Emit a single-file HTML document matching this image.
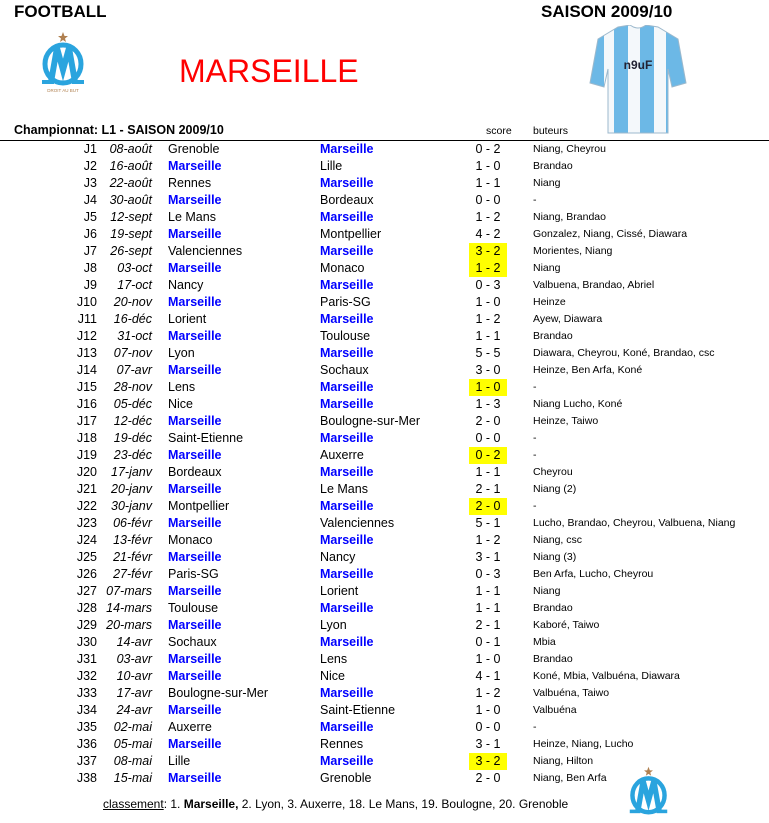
<!DOCTYPE html>
<html><head><meta charset="utf-8"><style>
body{margin:0;width:769px;height:820px;background:#fff;position:relative;font-family:"Liberation Sans",Arial,sans-serif;overflow:hidden}
.a{position:absolute;white-space:nowrap}
.r{position:absolute;left:0;width:769px;height:17px;font-size:12.5px;line-height:17px}
.r span{position:absolute;white-space:nowrap}
.j{right:672px;text-align:right}
.d{right:617px;font-style:italic}
.h{left:168px}
.w{left:320px}
.b{color:#0000ff;font-weight:bold}
.s{left:469px;width:38px;text-align:center}
.y{background:#ffff00}
.g{left:533px;font-size:10.5px}
</style></head><body>
<div class="a" style="left:14px;top:2px;font-size:17px;font-weight:bold">FOOTBALL</div>
<div class="a" style="left:541px;top:2px;font-size:17px;font-weight:bold">SAISON 2009/10</div>
<div class="a" style="left:179px;top:53px;font-size:32px;color:#ff0000">MARSEILLE</div>
<svg class="a" style="left:38px;top:30px" width="50" height="65" viewBox="0 0 50 65">
<polygon points="25,2 26.5,6 30,6 27,8.5 28,12 25,10 22,12 23,8.5 20,6 23.5,6" fill="#b08050"/>
<ellipse cx="25" cy="34" rx="18" ry="19" fill="none" stroke="#2aa4de" stroke-width="5"/>
<path d="M13,52 L19,18 L25,40 L31,18 L37,52" fill="none" stroke="#2aa4de" stroke-width="6" stroke-linejoin="miter"/>
<rect x="4" y="50" width="12" height="4" fill="#2aa4de"/><rect x="34" y="50" width="12" height="4" fill="#2aa4de"/>
<text x="25" y="62" font-size="4.5" fill="#b08050" text-anchor="middle" font-family="Liberation Sans">DROIT AU BUT</text>
</svg>
<svg class="a" style="left:588px;top:25px" width="100" height="110" viewBox="0 0 100 110">
<defs><clipPath id="c"><path d="M30,2 L42,0 Q50,6 58,0 L70,2 L90,14 L98,58 L84,62 L80,44 L80,108 L20,108 L20,44 L16,62 L2,58 L10,14Z"/></clipPath></defs>
<g clip-path="url(#c)"><rect width="100" height="110" fill="#f4f8fb"/>
<rect x="0" y="0" width="16" height="110" fill="#6cb8e6"/><rect x="26" y="0" width="14" height="110" fill="#6cb8e6"/><rect x="52" y="0" width="14" height="110" fill="#6cb8e6"/><rect x="78" y="0" width="22" height="110" fill="#6cb8e6"/></g>
<path d="M30,2 L42,0 Q50,6 58,0 L70,2 L90,14 L98,58 L84,62 L80,44 L80,108 L20,108 L20,44 L16,62 L2,58 L10,14Z" fill="none" stroke="#9cb8cc" stroke-width="1"/>
<text x="50" y="44" font-size="12" font-weight="bold" fill="#223" text-anchor="middle" font-family="Liberation Sans">n9uF</text>
</svg>
<div class="a" style="left:14px;top:123px;font-size:12.5px;font-weight:bold">Championnat: L1 - SAISON 2009/10</div>
<div class="a" style="left:486px;top:125px;font-size:10.5px">score</div>
<div class="a" style="left:533px;top:125px;font-size:10.5px">buteurs</div>
<div class="a" style="left:0;top:140px;width:769px;height:1px;background:#000"></div>
<div class="a" style="left:103px;top:797px;font-size:12px"><u>classement</u>: 1. <b>Marseille,</b> 2. Lyon, 3. Auxerre, 18. Le Mans, 19. Boulogne, 20. Grenoble</div>
<svg class="a" style="left:626px;top:765px" width="45" height="58" viewBox="0 0 50 65">
<polygon points="25,2 26.5,6 30,6 27,8.5 28,12 25,10 22,12 23,8.5 20,6 23.5,6" fill="#b08050"/>
<ellipse cx="25" cy="34" rx="18" ry="19" fill="none" stroke="#2aa4de" stroke-width="5"/>
<path d="M13,52 L19,18 L25,40 L31,18 L37,52" fill="none" stroke="#2aa4de" stroke-width="6"/>
<rect x="4" y="50" width="12" height="4" fill="#2aa4de"/><rect x="34" y="50" width="12" height="4" fill="#2aa4de"/>
</svg>
<div class="r" style="top:141px"><span class="j">J1</span><span class="d">08-août</span><span class="h">Grenoble</span><span class="w b">Marseille</span><span class="s">0 - 2</span><span class="g">Niang, Cheyrou</span></div>
<div class="r" style="top:158px"><span class="j">J2</span><span class="d">16-août</span><span class="h b">Marseille</span><span class="w">Lille</span><span class="s">1 - 0</span><span class="g">Brandao</span></div>
<div class="r" style="top:175px"><span class="j">J3</span><span class="d">22-août</span><span class="h">Rennes</span><span class="w b">Marseille</span><span class="s">1 - 1</span><span class="g">Niang</span></div>
<div class="r" style="top:192px"><span class="j">J4</span><span class="d">30-août</span><span class="h b">Marseille</span><span class="w">Bordeaux</span><span class="s">0 - 0</span><span class="g">-</span></div>
<div class="r" style="top:209px"><span class="j">J5</span><span class="d">12-sept</span><span class="h">Le Mans</span><span class="w b">Marseille</span><span class="s">1 - 2</span><span class="g">Niang, Brandao</span></div>
<div class="r" style="top:226px"><span class="j">J6</span><span class="d">19-sept</span><span class="h b">Marseille</span><span class="w">Montpellier</span><span class="s">4 - 2</span><span class="g">Gonzalez, Niang, Cissé, Diawara</span></div>
<div class="r" style="top:243px"><span class="j">J7</span><span class="d">26-sept</span><span class="h">Valenciennes</span><span class="w b">Marseille</span><span class="s y">3 - 2</span><span class="g">Morientes, Niang</span></div>
<div class="r" style="top:260px"><span class="j">J8</span><span class="d">03-oct</span><span class="h b">Marseille</span><span class="w">Monaco</span><span class="s y">1 - 2</span><span class="g">Niang</span></div>
<div class="r" style="top:277px"><span class="j">J9</span><span class="d">17-oct</span><span class="h">Nancy</span><span class="w b">Marseille</span><span class="s">0 - 3</span><span class="g">Valbuena, Brandao, Abriel</span></div>
<div class="r" style="top:294px"><span class="j">J10</span><span class="d">20-nov</span><span class="h b">Marseille</span><span class="w">Paris-SG</span><span class="s">1 - 0</span><span class="g">Heinze</span></div>
<div class="r" style="top:311px"><span class="j">J11</span><span class="d">16-déc</span><span class="h">Lorient</span><span class="w b">Marseille</span><span class="s">1 - 2</span><span class="g">Ayew, Diawara</span></div>
<div class="r" style="top:328px"><span class="j">J12</span><span class="d">31-oct</span><span class="h b">Marseille</span><span class="w">Toulouse</span><span class="s">1 - 1</span><span class="g">Brandao</span></div>
<div class="r" style="top:345px"><span class="j">J13</span><span class="d">07-nov</span><span class="h">Lyon</span><span class="w b">Marseille</span><span class="s">5 - 5</span><span class="g">Diawara, Cheyrou, Koné, Brandao, csc</span></div>
<div class="r" style="top:362px"><span class="j">J14</span><span class="d">07-avr</span><span class="h b">Marseille</span><span class="w">Sochaux</span><span class="s">3 - 0</span><span class="g">Heinze, Ben Arfa, Koné</span></div>
<div class="r" style="top:379px"><span class="j">J15</span><span class="d">28-nov</span><span class="h">Lens</span><span class="w b">Marseille</span><span class="s y">1 - 0</span><span class="g">-</span></div>
<div class="r" style="top:396px"><span class="j">J16</span><span class="d">05-déc</span><span class="h">Nice</span><span class="w b">Marseille</span><span class="s">1 - 3</span><span class="g">Niang Lucho, Koné</span></div>
<div class="r" style="top:413px"><span class="j">J17</span><span class="d">12-déc</span><span class="h b">Marseille</span><span class="w">Boulogne-sur-Mer</span><span class="s">2 - 0</span><span class="g">Heinze, Taiwo</span></div>
<div class="r" style="top:430px"><span class="j">J18</span><span class="d">19-déc</span><span class="h">Saint-Etienne</span><span class="w b">Marseille</span><span class="s">0 - 0</span><span class="g">-</span></div>
<div class="r" style="top:447px"><span class="j">J19</span><span class="d">23-déc</span><span class="h b">Marseille</span><span class="w">Auxerre</span><span class="s y">0 - 2</span><span class="g">-</span></div>
<div class="r" style="top:464px"><span class="j">J20</span><span class="d">17-janv</span><span class="h">Bordeaux</span><span class="w b">Marseille</span><span class="s">1 - 1</span><span class="g">Cheyrou</span></div>
<div class="r" style="top:481px"><span class="j">J21</span><span class="d">20-janv</span><span class="h b">Marseille</span><span class="w">Le Mans</span><span class="s">2 - 1</span><span class="g">Niang (2)</span></div>
<div class="r" style="top:498px"><span class="j">J22</span><span class="d">30-janv</span><span class="h">Montpellier</span><span class="w b">Marseille</span><span class="s y">2 - 0</span><span class="g">-</span></div>
<div class="r" style="top:515px"><span class="j">J23</span><span class="d">06-févr</span><span class="h b">Marseille</span><span class="w">Valenciennes</span><span class="s">5 - 1</span><span class="g">Lucho, Brandao, Cheyrou, Valbuena, Niang</span></div>
<div class="r" style="top:532px"><span class="j">J24</span><span class="d">13-févr</span><span class="h">Monaco</span><span class="w b">Marseille</span><span class="s">1 - 2</span><span class="g">Niang, csc</span></div>
<div class="r" style="top:549px"><span class="j">J25</span><span class="d">21-févr</span><span class="h b">Marseille</span><span class="w">Nancy</span><span class="s">3 - 1</span><span class="g">Niang (3)</span></div>
<div class="r" style="top:566px"><span class="j">J26</span><span class="d">27-févr</span><span class="h">Paris-SG</span><span class="w b">Marseille</span><span class="s">0 - 3</span><span class="g">Ben Arfa, Lucho, Cheyrou</span></div>
<div class="r" style="top:583px"><span class="j">J27</span><span class="d">07-mars</span><span class="h b">Marseille</span><span class="w">Lorient</span><span class="s">1 - 1</span><span class="g">Niang</span></div>
<div class="r" style="top:600px"><span class="j">J28</span><span class="d">14-mars</span><span class="h">Toulouse</span><span class="w b">Marseille</span><span class="s">1 - 1</span><span class="g">Brandao</span></div>
<div class="r" style="top:617px"><span class="j">J29</span><span class="d">20-mars</span><span class="h b">Marseille</span><span class="w">Lyon</span><span class="s">2 - 1</span><span class="g">Kaboré, Taiwo</span></div>
<div class="r" style="top:634px"><span class="j">J30</span><span class="d">14-avr</span><span class="h">Sochaux</span><span class="w b">Marseille</span><span class="s">0 - 1</span><span class="g">Mbia</span></div>
<div class="r" style="top:651px"><span class="j">J31</span><span class="d">03-avr</span><span class="h b">Marseille</span><span class="w">Lens</span><span class="s">1 - 0</span><span class="g">Brandao</span></div>
<div class="r" style="top:668px"><span class="j">J32</span><span class="d">10-avr</span><span class="h b">Marseille</span><span class="w">Nice</span><span class="s">4 - 1</span><span class="g">Koné, Mbia, Valbuéna, Diawara</span></div>
<div class="r" style="top:685px"><span class="j">J33</span><span class="d">17-avr</span><span class="h">Boulogne-sur-Mer</span><span class="w b">Marseille</span><span class="s">1 - 2</span><span class="g">Valbuéna, Taiwo</span></div>
<div class="r" style="top:702px"><span class="j">J34</span><span class="d">24-avr</span><span class="h b">Marseille</span><span class="w">Saint-Etienne</span><span class="s">1 - 0</span><span class="g">Valbuéna</span></div>
<div class="r" style="top:719px"><span class="j">J35</span><span class="d">02-mai</span><span class="h">Auxerre</span><span class="w b">Marseille</span><span class="s">0 - 0</span><span class="g">-</span></div>
<div class="r" style="top:736px"><span class="j">J36</span><span class="d">05-mai</span><span class="h b">Marseille</span><span class="w">Rennes</span><span class="s">3 - 1</span><span class="g">Heinze, Niang, Lucho</span></div>
<div class="r" style="top:753px"><span class="j">J37</span><span class="d">08-mai</span><span class="h">Lille</span><span class="w b">Marseille</span><span class="s y">3 - 2</span><span class="g">Niang, Hilton</span></div>
<div class="r" style="top:770px"><span class="j">J38</span><span class="d">15-mai</span><span class="h b">Marseille</span><span class="w">Grenoble</span><span class="s">2 - 0</span><span class="g">Niang, Ben Arfa</span></div>
</body></html>
